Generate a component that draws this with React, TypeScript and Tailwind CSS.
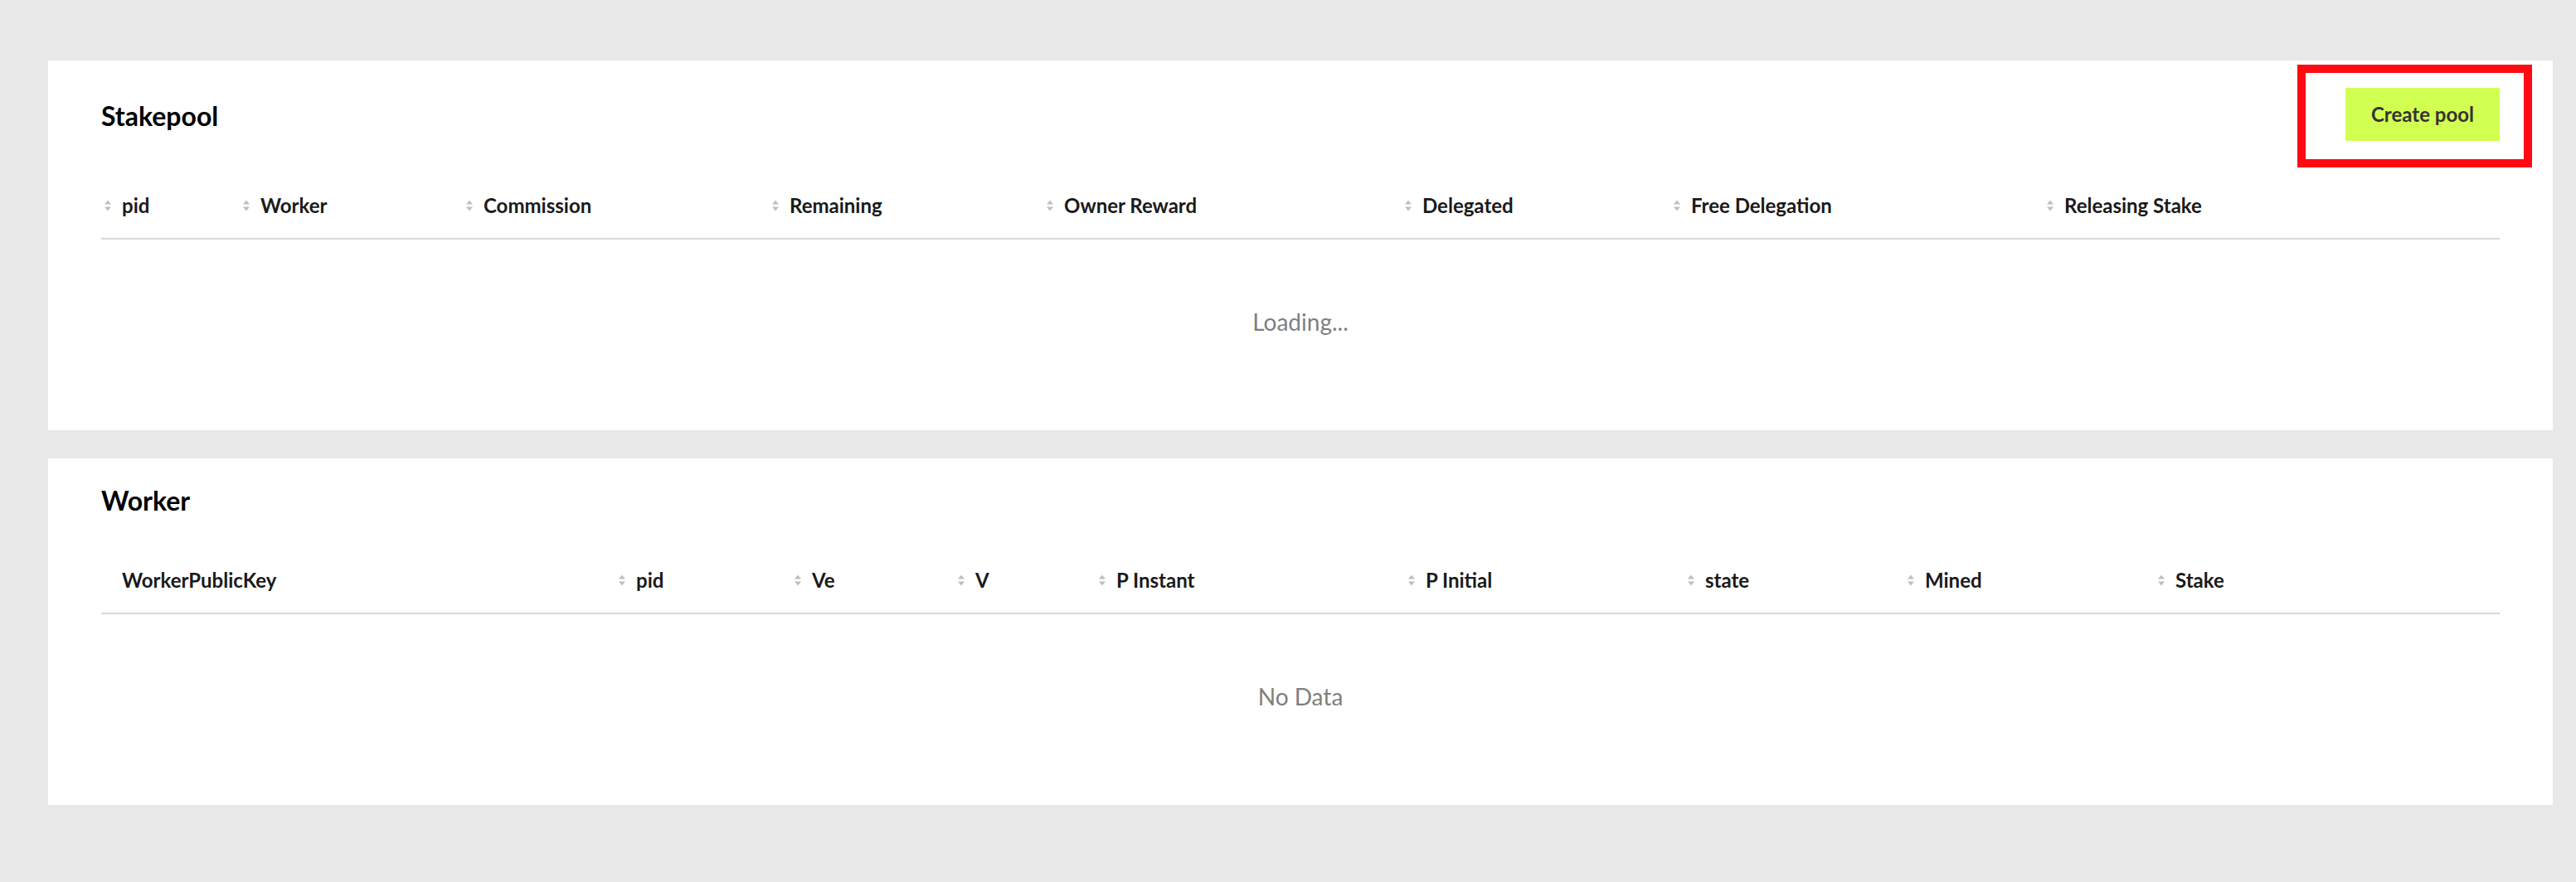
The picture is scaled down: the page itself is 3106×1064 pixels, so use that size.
import React from "react";

function SortIcon() {
  return (
    <svg width="8" height="16" viewBox="0 0 8 16" className="shrink-0">
      <path d="M0 6.5 L4 1.5 L8 6.5 Z" fill="#bfbfbf" />
      <path d="M0 9.5 L8 9.5 L4 14.5 Z" fill="#bfbfbf" />
    </svg>
  );
}

type Col = { label: string; sort: boolean };

function HeaderCell({ col }: { col: Col }) {
  return (
    <div className="flex items-center pl-[4px] gap-[13px] whitespace-nowrap">
      {col.sort ? <SortIcon /> : <span className="w-[8px] shrink-0" />}
      <span className="text-[24px] font-bold leading-[36px] text-[#1a1a1a]">{col.label}</span>
    </div>
  );
}

const stakeCols: Col[] = [
  { label: "pid", sort: true },
  { label: "Worker", sort: true },
  { label: "Commission", sort: true },
  { label: "Remaining", sort: true },
  { label: "Owner Reward", sort: true },
  { label: "Delegated", sort: true },
  { label: "Free Delegation", sort: true },
  { label: "Releasing Stake", sort: true },
];

const workerCols: Col[] = [
  { label: "WorkerPublicKey", sort: false },
  { label: "pid", sort: true },
  { label: "Ve", sort: true },
  { label: "V", sort: true },
  { label: "P Instant", sort: true },
  { label: "P Initial", sort: true },
  { label: "state", sort: true },
  { label: "Mined", sort: true },
  { label: "Stake", sort: true },
];

export default function App() {
  return (
    <div className="min-h-screen bg-[#e8e8e8] pl-[58px] pr-[28px] pt-[73px] pb-[93px] font-[Lato] flex flex-col gap-[34px]">
      {/* Stakepool card */}
      <div className="relative bg-white px-[64px] pt-[33px] pb-[33px]">
        <div className="flex items-center justify-between">
          <h2 className="text-[32px] font-bold leading-[36px] text-black pt-[4px]">Stakepool</h2>
          <button className="w-[186px] h-[64px] bg-[#d1ff52] text-[24px] font-bold text-[#333333]">
            Create pool
          </button>
        </div>
        <div className="mt-[38px]">
          <div className="grid grid-cols-[167px_269px_369px_331px_432px_324px_450px_551px] h-[81px] items-center border-b-2 border-[#d9d9d9]">
            {stakeCols.map((c) => (
              <HeaderCell key={c.label} col={c} />
            ))}
          </div>
          <div className="h-[197px] flex items-center justify-center text-[28px] text-[#7f7f7f]">
            Loading...
          </div>
        </div>
        <div className="absolute left-[2712px] top-[5px] w-[283px] h-[124px] border-[10px] border-[#ff0a12] pointer-events-none" />
      </div>

      {/* Worker card */}
      <div className="bg-white px-[64px] pt-[33px] pb-[33px]">
        <div className="flex items-center">
          <h2 className="text-[32px] font-bold leading-[36px] text-black">Worker</h2>
        </div>
        <div className="mt-[38px]">
          <div className="grid grid-cols-[620px_212px_197px_170px_373px_337px_265px_302px_417px] h-[81px] items-center border-b-2 border-[#d9d9d9]">
            {workerCols.map((c) => (
              <HeaderCell key={c.label} col={c} />
            ))}
          </div>
          <div className="h-[197px] flex items-center justify-center text-[28px] text-[#7f7f7f]">
            No Data
          </div>
        </div>
      </div>
    </div>
  );
}
